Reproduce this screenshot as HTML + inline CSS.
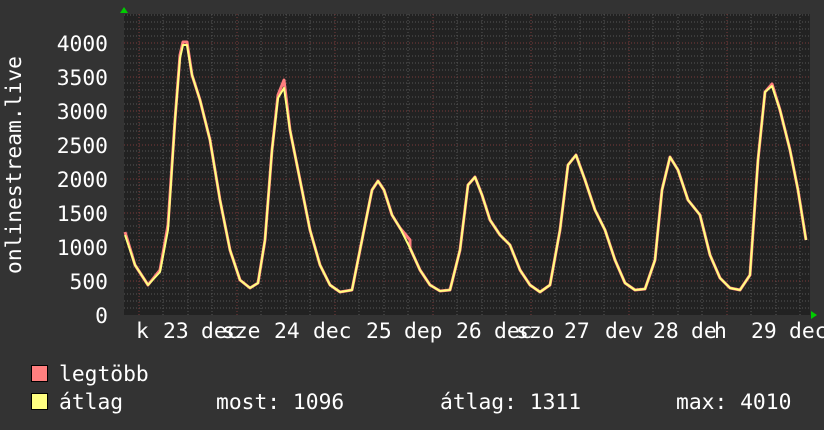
<!DOCTYPE html><html><head><style>body{margin:0;background:#333}svg{display:block}text{font-family:"DejaVu Sans Mono","Liberation Mono",monospace;fill:#fff;font-size:21.3px}</style></head><body>
<svg width="824" height="430" xmlns="http://www.w3.org/2000/svg">
<rect width="824" height="430" fill="#333"/>
<rect x="124" y="14" width="686" height="301" fill="#222"/>
<g stroke-width="1" stroke-dasharray="1,2">
<path stroke="#555" d="M124 308H810M124 301H810M124 294H810M124 288H810M124 274H810M124 267H810M124 260H810M124 254H810M124 240H810M124 233H810M124 226H810M124 219H810M124 206H810M124 199H810M124 192H810M124 185H810M124 172H810M124 165H810M124 158H810M124 151H810M124 138H810M124 131H810M124 124H810M124 117H810M124 104H810M124 97H810M124 90H810M124 83H810M124 70H810M124 63H810M124 56H810M124 49H810M124 36H810M124 29H810M124 22H810M124 15H810"/>
<path stroke="#555" d="M163 14V315M188 14V315M212 14V315M261 14V315M286 14V315M310 14V315M359 14V315M384 14V315M408 14V315M457 14V315M482 14V315M506 14V315M555 14V315M580 14V315M604 14V315M653 14V315M678 14V315M702 14V315M751 14V315M776 14V315M800 14V315"/>
<path stroke="#7a3a3a" d="M124 281H810M124 247H810M124 213H810M124 179H810M124 145H810M124 111H810M124 77H810M124 43H810M139 14V315M237 14V315M335 14V315M433 14V315M531 14V315M629 14V315M727 14V315"/>
</g>
<g fill="none" stroke-linejoin="round">
<polyline stroke="#ff7f7f" stroke-width="3" points="125,232 135,265 148,285 160,270 168,225 175,120 180,55 183,42 187,42 192,75 200,100 210,140 220,200 230,250 240,280 250,288 258,283 265,240 272,150 278,95 284,80 290,130 300,180 310,230 320,265 330,285 340,292 352,290 362,240 372,190 378,181 384,190 392,215 400,228 410,240 410,248 420,270 430,285 440,291 450,290 460,250 468,185 475,177 482,195 490,220 500,235 510,245 520,270 530,285 540,292 550,285 560,230 568,165 576,155 585,180 595,210 605,230 615,260 625,283 635,290 645,289 655,260 662,190 670,157 678,170 688,200 700,215 710,255 720,278 730,288 740,290 750,275 758,160 765,92 772,84 780,110 790,150 798,190 806,240"/>
<polyline stroke="#ffff80" stroke-width="2" points="125,235 135,265 148,285 160,272 168,230 175,120 180,58 183,45 187,45 192,75 200,100 210,140 220,200 230,250 240,280 250,288 258,283 265,240 272,150 278,98 284,88 290,130 300,180 310,230 320,265 330,285 340,292 352,290 362,240 372,190 378,181 384,190 392,215 400,228 410,248 420,270 430,285 440,291 450,290 460,250 468,185 475,177 482,195 490,220 500,235 510,245 520,270 530,285 540,292 550,285 560,230 568,165 576,155 585,180 595,210 605,230 615,260 625,283 635,290 645,289 655,260 662,190 670,157 678,170 688,200 700,215 710,255 720,278 730,288 740,290 750,275 758,160 765,92 772,86 780,110 790,150 798,190 806,240"/>
</g>
<path d="M120 13l4-6 4 6z" fill="#0c0"/><path d="M811 311l6 4-6 4z" fill="#0c0"/>
<g text-anchor="end">
<text x="108" y="51">4000</text><text x="108" y="85">3500</text><text x="108" y="119">3000</text><text x="108" y="153">2500</text><text x="108" y="187">2000</text><text x="108" y="221">1500</text><text x="108" y="255">1000</text><text x="108" y="289">500</text><text x="108" y="323">0</text>
</g>
<text transform="translate(21,274) rotate(-90)">onlinestream.live</text>
<text x="136" y="338">k</text><text x="163" y="338">23</text><text x="201" y="338">dec</text><text x="222" y="338">sze</text><text x="274" y="338">24</text><text x="313" y="338">dec</text><text x="366" y="338">25</text><text x="404" y="338">dep</text><text x="456" y="338">26</text><text x="494" y="338">dec</text><text x="516" y="338">szo</text><text x="564" y="338">27</text><text x="605" y="338">dev</text><text x="653" y="338">28</text><text x="691" y="338">de</text><text x="714" y="338">h</text><text x="751" y="338">29</text><text x="789" y="338">dec</text>
<rect x="31.5" y="365.5" width="16" height="16" fill="#ff7f7f" stroke="#000"/>
<rect x="31.5" y="393.5" width="16" height="16" fill="#ffff80" stroke="#000"/>
<text x="59" y="381">legtöbb</text><text x="59" y="409">átlag</text>
<text x="216" y="409">most: 1096</text><text x="440" y="409">átlag: 1311</text><text x="676" y="409">max: 4010</text>
</svg></body></html>
